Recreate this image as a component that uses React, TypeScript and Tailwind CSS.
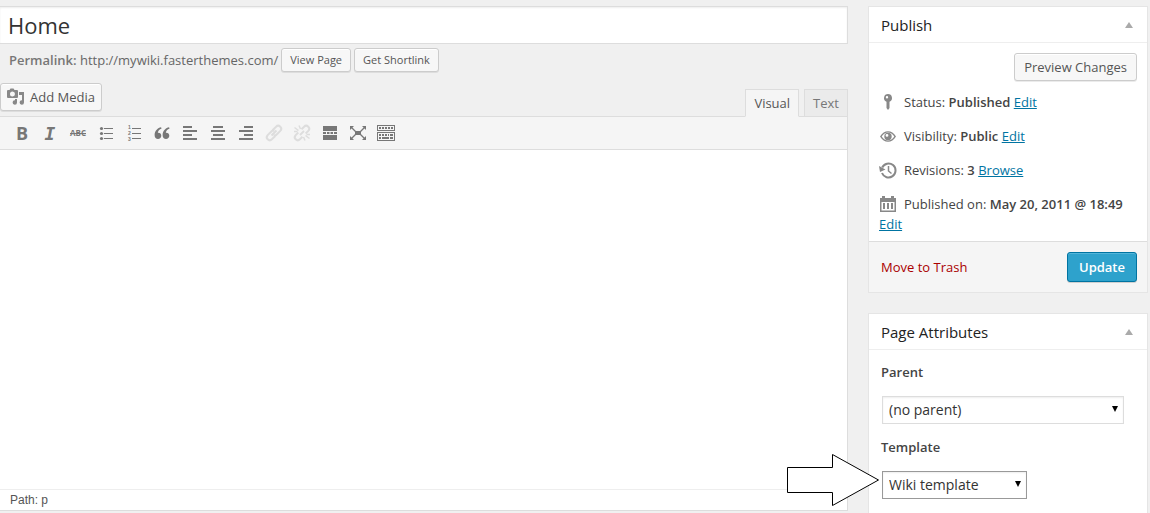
import { useState } from "react";
import type { ReactNode } from "react";
import { clsx } from "clsx";

const Icon = ({ children, className }: { children: ReactNode; className?: string }) => (
  <svg viewBox="0 0 20 20" fill="currentColor" className={clsx("h-5 w-5 shrink-0 overflow-visible", className)} aria-hidden="true">
    {children}
  </svg>
);

const toolbarItems: { label: string; disabled?: boolean; icon: ReactNode }[] = [
  {
    label: "Bold",
    icon: <text x="10" y="17" textAnchor="middle" className="font-['Open_Sans'] text-[18px] font-bold">B</text>,
  },
  {
    label: "Italic",
    icon: (
      <text x="10" y="17" textAnchor="middle" className="font-['DejaVu_Sans_Mono'] text-[18px] font-bold italic">I</text>
    ),
  },
  {
    label: "Strikethrough",
    icon: (
      <>
        <text x="10" y="13" textAnchor="middle" className="font-['Open_Sans'] text-[8px] font-bold">ABC</text>
        <path d="M2 10h16v1H2z" />
      </>
    ),
  },
  {
    label: "Bulleted list",
    icon: (
      <>
        <circle cx="5.5" cy="5.5" r="1.6" />
        <circle cx="5.5" cy="10.5" r="1.6" />
        <circle cx="5.5" cy="15.5" r="1.6" />
        <path d="M8 5h9v1H8zM8 10h9v1H8zM8 15h9v1H8z" />
      </>
    ),
  },
  {
    label: "Numbered list",
    icon: (
      <>
        <text x="4" y="6" className="font-['Liberation_Sans'] text-[5px] font-bold">1</text>
        <text x="4" y="12" className="font-['Liberation_Sans'] text-[5px] font-bold">2</text>
        <text x="4" y="18" className="font-['Liberation_Sans'] text-[5px] font-bold">3</text>
        <path d="M8 5h9v1H8zM8 10h9v1H8zM8 15h9v1H8z" />
      </>
    ),
  },
  {
    label: "Blockquote",
    icon: (
      <path d="M9.1 4.2C6 4.9 2.6 7.3 2.6 12c0 2.500 1.400 4 3.400 4 1.900 0 3.300-1.400 3.300-3.200 0-1.800-1.200-3-3-3h-.5c.2-1.900 1.500-3.400 3.700-4zM17.100 4.200c-3.100.7-6.500 3.100-6.500 7.800 0 2.500 1.400 4 3.400 4 1.900 0 3.300-1.400 3.300-3.200 0-1.800-1.200-3-3-3h-.5c.2-1.900 1.500-3.400 3.700-4z" />
    ),
  },
  { label: "Align left", icon: <path d="M3 3h9v2H3zM3 7h14v2H3zM3 11h9v2H3zM3 15h14v2H3z" /> },
  { label: "Align center", icon: <path d="M5 3h10v2H5zM3 7h14v2H3zM5 11h10v2H5zM3 15h14v2H3z" /> },
  { label: "Align right", icon: <path d="M8 3h9v2H8zM3 7h14v2H3zM8 11h9v2H8zM3 15h14v2H3z" /> },
  {
    label: "Insert link",
    disabled: true,
    icon: (
      <path
        d="M7.500 12.500l5-5M8.500 7.300l3.600-3.600a2.900 2.900 0 0 1 4.200 4.200l-3.600 3.600a2.900 2.900 0 0 1-3 .7M11.500 12.700l-3.600 3.600a2.900 2.900 0 0 1-4.200-4.200l3.600-3.600a2.900 2.900 0 0 1 3-.7"
        fill="none"
        stroke="currentColor"
        strokeWidth="2"
      />
    ),
  },
  {
    label: "Remove link",
    disabled: true,
    icon: (
      <g fill="none" stroke="currentColor" strokeWidth="2">
        <path d="m9.500 6.300 2.600-2.600a2.900 2.900 0 0 1 4.200 4.200l-2.600 2.600M10.500 13.700l-2.600 2.600a2.900 2.900 0 0 1-4.200-4.200l2.600-2.600" />
        <path d="m2.500 4.500 4 3M7 2.500l1.500 3.500M2 8.500h3.500M17.500 15.500l-4-3M13 17.500 11.500 14M18 11.500h-3.500" strokeWidth="1.500" />
        <path d="m8 12 4-4" />
      </g>
    ),
  },
  {
    label: "Insert Read More tag",
    icon: <path d="M3 3h14v5H3zM3 9h3v2H3zM7 9h2.500v2H7zM10.500 9H13v2h-2.500zM14 9h3v2h-3zM3 12h14v5H3z" />,
  },
  {
    label: "Fullscreen",
    icon: (
      <>
        <path d="M7 8h6v4H7zM2 3h4L2 7zM18 3v4l-4-4zM2 17v-4l4 4zM18 17h-4l4-4z" />
        <path d="m3.500 4.500 4 4M16.500 4.500l-4 4M3.500 15.500l4-4M16.500 15.500l-4-4" stroke="currentColor" strokeWidth="1.300" />
      </>
    ),
  },
  {
    label: "Toolbar toggle",
    icon: (
      <path
        fillRule="evenodd"
        d="M1 2h18v6H1zM2 3v4h16V3zM1 9h18v9H1zM2 10v7h16v-7zM3 4h2v2H3zM6 4h2v2H6zM9 4h2v2H9zM12 4h2v2h-2zM15 4h2v2h-2zM3 11h2v2H3zM6 11h2v2H6zM9 11h2v2H9zM12 11h1v2h-1zM14 11h3v2h-3zM3 14h2v2H3zM6 14h7v2H6zM14 14h3v2h-3z"
      />
    ),
  },
];

const buttonBase =
  "rounded-[3px] border border-[#cccccc] bg-[#f7f7f7] text-[#555555] shadow-[inset_0_1px_0_#ffffff,0_1px_0_rgba(0,0,0,0.08)] hover:bg-[#fafafa]";

const Panel = ({ title, className, children }: { title: string; className?: string; children: ReactNode }) => {
  const [open, setOpen] = useState(true);

  return (
    <section className={clsx("border border-[#e5e5e5] bg-white", className)}>
      <div className="flex h-9 items-center justify-between border-b border-[#eeeeee] px-3">
        <h3 className="text-[15px] leading-5 font-medium text-[#222222]">{title}</h3>
        <button type="button" aria-label={`Toggle ${title}`} onClick={() => setOpen(!open)} className="px-0.5 text-[#aaaaaa]">
          <svg viewBox="0 0 8 6" fill="currentColor" className="h-1.5 w-2" aria-hidden="true">
            <path d="M4 0l4 6H0z" />
          </svg>
        </button>
      </div>
      {open && children}
    </section>
  );
};

const PublishRow = ({ icon, children }: { icon: ReactNode; children: ReactNode }) => (
  <div className="px-2.5 py-[7px]">
    <Icon className="-ml-px mr-1.5 inline-block align-top text-[#888888]">{icon}</Icon>
    {children}
  </div>
);

const EditLink = ({ children }: { children: ReactNode }) => (
  <a href="#" className="text-[#0074a2] underline">
    {children}
  </a>
);

const SelectField = ({
  id,
  label,
  options,
  className,
  annotation,
}: {
  id: string;
  label: string;
  options: string[];
  className: string;
  annotation?: ReactNode;
}) => (
  <div className="mb-[13px]">
    <label htmlFor={id} className="block font-semibold">
      {label}
    </label>
    <div className={clsx("relative mx-px mt-3.5 h-7", className)}>
      <select
        id={id}
        className="h-full w-full appearance-none border border-inherit bg-white pl-1.5 text-[14px] text-[#333333] shadow-[inset_0_1px_2px_rgba(0,0,0,0.07)] outline-none"
      >
        {options.map((option) => (
          <option key={option}>{option}</option>
        ))}
      </select>
      <svg viewBox="0 0 6 6" className="pointer-events-none absolute top-2.5 right-1.5 h-1.5 w-1.5" aria-hidden="true">
        <path d="M0 0h6L3 6z" />
      </svg>
      {annotation}
    </div>
  </div>
);

export default function App() {
  const [tab, setTab] = useState("Visual");

  return (
    <div className="flex min-h-screen gap-5 bg-[#f0f0f0] pt-1.5 pr-0.5 font-['Open_Sans',sans-serif] text-[13px] leading-5 text-[#444444]">
      <main className="flex min-w-0 flex-1 flex-col pb-0.5">
        <input
          type="text"
          aria-label="Title"
          defaultValue="Home"
          className="h-[38px] w-full border-y border-r border-[#dddddd] bg-white px-2 text-[22px] leading-7 text-[#333333] shadow-[inset_0_1px_2px_rgba(0,0,0,0.07)] outline-none"
        />

        <div className="mt-1 flex items-center gap-[3px] pl-[9px] text-[#666666]">
          <span>
            <strong className="font-semibold text-[#777777]">Permalink:</strong> http://mywiki.fasterthemes.com/
          </span>
          <button type="button" className={clsx(buttonBase, "h-6 px-2 text-[11px] leading-4")}>View Page</button>
          <button type="button" className={clsx(buttonBase, "h-6 px-2 text-[11px] leading-4")}>Get Shortlink</button>
        </div>

        {/* Media button and editor tabs */}
        <div className="mt-[11px] flex h-[33px] items-start justify-between">
          <button type="button" className={clsx(buttonBase, "flex h-7 items-center gap-1 pr-1.5 pl-[5px]")}>
            <Icon className="text-[#888888]">
              <path
                fillRule="evenodd"
                d="M3.500 3 4.500 1.500h3L8.500 3H11a1 1 0 0 1 1 1v6a1 1 0 0 1-1 1H2a1 1 0 0 1-1-1V4a1 1 0 0 1 1-1zM6.500 4.500a2.500 2.500 0 1 0 0 5 2.500 2.500 0 0 0 0-5z"
              />
              <path d="M13 5h5v10.500a2.200 2.200 0 1 1-2-2.200V8h-3z" />
              <path d="M9 12h2v3.500a2.200 2.200 0 1 1-2-2.200z" />
            </Icon>
            Add Media
          </button>
          <div className="flex gap-[5px] self-end" role="tablist">
            {["Visual", "Text"].map((name) => (
              <button
                key={name}
                type="button"
                role="tab"
                aria-selected={tab === name}
                onClick={() => setTab(name)}
                className={clsx(
                  "relative -mb-px h-7 border border-[#dddddd] px-2",
                  tab === name ? "border-b-[#f5f5f5] bg-[#f5f5f5] text-[#555555]" : "bg-[#ebebeb] text-[#777777]"
                )}
              >
                {name}
              </button>
            ))}
          </div>
        </div>

        <div className="flex flex-1 flex-col border-y border-r border-[#dddddd] bg-white">
          <div className="flex h-[33px] items-center border-b border-[#dddddd] bg-[#f5f5f5] pl-2" role="toolbar">
            {toolbarItems.map((item) => (
              <button
                key={item.label}
                type="button"
                aria-label={item.label}
                disabled={item.disabled}
                className="flex h-7 w-7 items-center justify-center text-[#777777] disabled:text-[#dddddd]"
              >
                <Icon>{item.icon}</Icon>
              </button>
            ))}
          </div>
          <textarea aria-label="Page content" className="w-full flex-1 resize-none p-2.5 outline-none" />
          <div className="h-[21px] border-t border-[#eeeeee] px-2.5 font-['Liberation_Sans',sans-serif] text-[12px] leading-5 text-[#555555]">
            Path: p
          </div>
        </div>
      </main>

      <aside className="flex w-[280px] shrink-0 flex-col gap-5">
        <Panel title="Publish">
          <div className="flex justify-end px-2.5 pt-2.5 pb-1">
            <button type="button" className={clsx(buttonBase, "h-7 px-[9px]")}>Preview Changes</button>
          </div>
          <PublishRow
            icon={<path fillRule="evenodd" d="M10 2a4 4 0 0 1 1.500 7.700V16L10 18l-1.500-2V9.700A4 4 0 0 1 10 2zM9 4a1.200 1.200 0 1 0 0 2.400A1.200 1.200 0 0 0 9 4z" />}
          >
            Status: <b className="font-semibold">Published</b> <EditLink>Edit</EditLink>
          </PublishRow>
          <PublishRow
            icon={
              <>
                <path
                  fillRule="evenodd"
                  d="M2 10.500C4 7 7 5.300 10 5.300s6 1.700 8 5.200c-2 3.500-5 5.200-8 5.200s-6-1.700-8-5.200zm1.700 0c1.700 2.600 4 3.900 6.300 3.900s4.600-1.300 6.300-3.900C14.600 7.900 12.300 6.600 10 6.600S5.400 7.900 3.700 10.500z"
                />
                <path fillRule="evenodd" d="M10 6.800a3.700 3.700 0 1 1 0 7.400 3.700 3.700 0 0 1 0-7.400zM9 8a1.400 1.400 0 1 0 0 2.800A1.400 1.400 0 0 0 9 8z" />
              </>
            }
          >
            Visibility: <b className="font-semibold">Public</b> <EditLink>Edit</EditLink>
          </PublishRow>
          <PublishRow
            icon={
              <>
                <path d="M4.200 7.500a7 7 0 1 1-.2 5.500" fill="none" stroke="currentColor" strokeWidth="2" />
                <path d="M1 6l1 6 5.500-2.500z" />
                <path d="M10.500 6v5l3 2.500" fill="none" stroke="currentColor" strokeWidth="1.500" />
              </>
            }
          >
            Revisions: <b className="font-semibold">3</b> <EditLink>Browse</EditLink>
          </PublishRow>
          <PublishRow
            icon={
              <path
                fillRule="evenodd"
                d="M2 4h2V2h3v2h6V2h3v2h2v14H2zM3.500 8v8.500h13V8zM5 9h2v6H5zM9 9h2v6H9zM13 9h2v6h-2z"
              />
            }
          >
            Published on: <b className="font-semibold">May 20, 2011 @ 18:49</b> <EditLink>Edit</EditLink>
          </PublishRow>
          <div className="flex items-center justify-between border-t border-[#dddddd] bg-[#f5f5f5] py-2.5 pr-2.5 pl-3">
            <a href="#" className="text-[#aa0000]">Move to Trash</a>
            <button
              type="button"
              className="h-[30px] rounded-[3px] border border-[#0074a2] bg-[#2ea2cc] px-[11px] font-semibold text-white shadow-[inset_0_1px_0_rgba(120,200,230,0.5),0_1px_0_rgba(0,0,0,0.15)] hover:bg-[#1e8cbe]"
            >
              Update
            </button>
          </div>
        </Panel>

        <Panel title="Page Attributes" className="flex-1 border-b-0">
          <div className="px-3 pt-3">
            <SelectField id="parent" label="Parent" options={["(no parent)"]} className="w-[242px] border-[#dddddd]" />
            <SelectField
              id="template"
              label="Template"
              options={["Wiki template", "Default Template"]}
              className="w-[145px] border-[#999999]"
              annotation={
                <svg
                  viewBox="0 0 92 52"
                  className="pointer-events-none absolute -top-[17px] right-full mr-[3px] h-[52px] w-[92px]"
                  aria-hidden="true"
                >
                  <path d="M.5 13.500h45V.5l46 25.500-46 25.500v-13H.5z" fill="white" stroke="black" />
                </svg>
              }
            />
          </div>
        </Panel>
      </aside>
    </div>
  );
}
